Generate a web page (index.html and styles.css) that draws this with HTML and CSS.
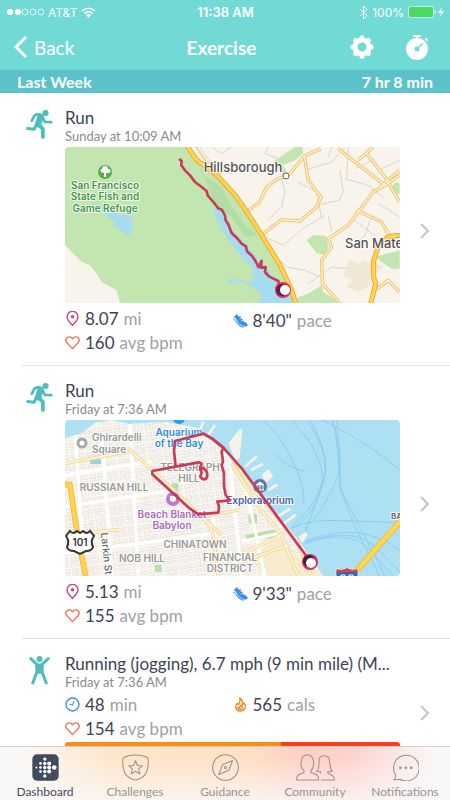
FILE: index.html
```html
<!DOCTYPE html>
<html lang="en">
<head>
    <meta charset="UTF-8">
    <meta name="viewport" content="width=device-width, initial-scale=1.0">
    <title>Exercise</title>
    <link rel="stylesheet" href="styles.css">
</head>
<body>

<!-- Shared icons -->
<svg class="sprite" aria-hidden="true">
    <symbol id="runner" viewBox="0 0 80 86">
        <circle cx="58" cy="9" r="9" fill="#4dbdbd"/>
        <g fill="none" stroke="#4dbdbd" stroke-linecap="round" stroke-linejoin="round">
            <path d="M17 32L24 18Q32 9 46 16" stroke-width="8"/>
            <path d="M43 20L36 42" stroke-width="19"/>
            <path d="M49 21L56 35L75 36" stroke-width="8"/>
            <path d="M31 43L24 57L5 55" stroke-width="9"/>
            <path d="M38 44L50 56L50 80" stroke-width="11"/>
        </g>
    </symbol>
    <symbol id="pin" viewBox="0 0 44 44">
        <path d="M22 42Q6 27 6 17A16 16 0 0 1 38 17Q38 27 22 42Z" fill="none" stroke="#d93b73" stroke-width="4"/>
        <circle cx="22" cy="17" r="5" fill="#d93b73"/>
    </symbol>
    <symbol id="heart" viewBox="0 0 44 44">
        <path d="M22 40L5 22C-3 10 13-2 22 11C31-2 47 10 39 22Z" fill="none" stroke="#f4705a" stroke-width="4" stroke-linejoin="round"/>
    </symbol>
    <symbol id="shoe" viewBox="0 0 44 44">
        <path d="M2 12L12 3Q14 12 22 10L32 26Q42 28 43 37Q39 42 29 38Q18 34 13 24Q9 15 2 12Z" fill="#3a8fe8"/>
        <path d="M2 18Q8 20 12 29Q19 39 30 42" fill="none" stroke="#3a8fe8" stroke-width="3" stroke-linecap="round"/>
        <path d="M19 18L25 15M23 24L29 21" stroke="#fff" stroke-width="2"/>
    </symbol>
    <symbol id="chevron" viewBox="0 0 10 16">
        <path d="M1 1L8 8L1 15" fill="none" stroke="#c4c4c8" stroke-width="2"/>
    </symbol>
</svg>

<div class="app">
    <header class="header">
        <div class="status">
            <div class="status-left">
                <svg width="37" height="8" viewBox="0 0 37 8" aria-hidden="true">
                    <g fill="#fff"><circle cx="3" cy="4" r="3"/><circle cx="11" cy="4" r="3"/></g>
                    <g fill="none" stroke="#fff" stroke-opacity=".8"><circle cx="18" cy="4" r="3"/><circle cx="26" cy="4" r="3"/><circle cx="34" cy="4" r="3"/></g>
                </svg>
                <span>AT&amp;T</span>
                <svg width="15" height="11" viewBox="0 0 15 11" aria-hidden="true">
                    <path d="M1 4Q7.500-1.500 14 4M3.500 6.500Q7.500 3 11.500 6.500" fill="none" stroke="#fff" stroke-width="1.600"/>
                    <path d="M5 8Q7.500 6 10 8L7.500 11Z" fill="#fff"/>
                </svg>
            </div>
            <strong class="clock">11:38 AM</strong>
            <div class="status-right">
                <svg width="9" height="15" viewBox="0 0 9 15" aria-hidden="true"><path d="M1 4L8 10.500L4.500 14V1L8 4.500L1 11" fill="none" stroke="#fff"/></svg>
                <span>100%</span>
                <svg width="36" height="12" viewBox="0 0 36 12" aria-hidden="true">
                    <rect x=".5" y=".5" width="25" height="11" rx="2" fill="#4cd95f" stroke="#c9f3ef"/>
                    <path d="M26.500 4Q29 6 26.500 8Z" fill="#fff"/>
                    <path d="M34 1L30 7H33L32 11L36 5H33Z" fill="#fff"/>
                </svg>
            </div>
        </div>
        <nav class="nav">
            <button class="back">
                <svg width="14" height="22" viewBox="0 0 14 22" aria-hidden="true"><path d="M12 1L2 11L12 21" fill="none" stroke="#fff" stroke-width="3"/></svg>
                Back
            </button>
            <h1>Exercise</h1>
            <div class="actions">
                <button aria-label="Settings">
                    <svg width="24" height="24" viewBox="-12 -12 24 24">
                        <circle r="7" fill="none" stroke="#fff" stroke-width="5"/>
                        <g stroke="#fff" stroke-width="5" stroke-linecap="round">
                            <path d="M0-9V-9.200M0 9V9.200M-9 0H-9.200M9 0H9.200M6.400 6.400L6.500 6.500M-6.400-6.400L-6.500-6.500M6.400-6.400L6.500-6.500M-6.400 6.400L-6.500 6.500"/>
                        </g>
                    </svg>
                </button>
                <button aria-label="Timer">
                    <svg width="24" height="25" viewBox="0 0 24 25">
                        <circle cx="12" cy="14" r="11" fill="#fff"/>
                        <path d="M9 1H15M12 1V4M21 4L22 5" stroke="#fff" stroke-width="2" stroke-linecap="round"/>
                        <path d="M12 14L17.500 8.500" stroke="#71dad4" stroke-width="1.500"/>
                        <circle cx="12" cy="14" r="2.500" fill="#71dad4"/>
                    </svg>
                </button>
            </div>
        </nav>
        <div class="week"><span>Last Week</span><span>7 hr 8 min</span></div>
    </header>

    <main class="list">
        <a class="item" href="#">
            <svg class="sport" width="27" height="29"><use href="#runner"/></svg>
            <div class="info">
                <h2>Run</h2>
                <p class="date">Sunday at 10:09 AM</p>
                <svg class="map" viewBox="0 0 335 156" preserveAspectRatio="xMidYMid slice">
                    <rect width="335" height="156" fill="#f8f3eb"/>
                    <g transform="scale(.3333)" fill="none" stroke-linejoin="round">
                        <path d="M0 0H365L395 39L455 84L510 144L590 264L645 354L692 469H165L155 430L110 405L95 380L75 355L50 345L25 320L0 293Z" fill="#c3e6b1"/>
                        <path d="M395 39L420 90L470 120L500 180L545 240L580 264L540 270L500 210L450 170Z" fill="#b3dda7"/>
                        <path d="M625 44L660 20L690 0H712L715 17L690 40L660 52L640 62ZM725 280L745 264L782 266L790 300L780 325L755 318ZM700 450L730 440L770 415L775 435L830 469H692ZM930 330L1004 310V365L980 365ZM975 120L995 105L1004 110V140L985 142ZM650 50L670 80L655 90L643 60Z" fill="#c3e6b1"/>
                        <path d="M835 385L855 335L880 350L895 340L955 358L930 380L915 415L880 435L845 420L862 400Z" fill="#f1e7d5"/>
                        <!-- lakes -->
                        <path d="M443 184L462 182L478 215L502 250L540 289L580 339L608 365L630 399L690 440L692 469H580L590 440L555 415L490 394L530 398L558 410L566 370L545 345L530 330L507 300L470 250ZM75 166L130 183L165 205L190 200L203 220L200 255L190 266L170 250L145 237L150 225L125 205L95 184ZM485 392L515 405L510 412L490 402Z" fill="#a5dcef"/>
                        <!-- small streets -->
                        <path d="M405 0L425 30L455 70L500 80M650 95L660 135L650 180L610 220M700 105L755 135L770 215M755 175L822 160L835 135L825 70M720 70L800 45L840 0M840 95L910 115L960 155M870 65L930 35M590 265L655 295L720 240L780 205M605 300L665 360L720 370L765 390M790 205L800 250M915 220L900 265L860 300M930 265L860 215M800 0L790 30M730 410L800 360L850 365M1004 210L940 170M1004 40L950 65M610 0L600 20L640 35M850 0L845 95M440 0L470 20L500 0" stroke="#d9d5cf" stroke-width="3"/>
                        <!-- secondary roads -->
                        <path d="M545 194L583 166L605 120L640 95L675 80L718 27L768 5M718 27L730 100L768 150L755 180L705 222L650 218L590 264M820 5L855 33L960 115L1004 85M960 115L925 135L895 175L850 235L790 275L800 300L770 340L772 410L825 469M875 190L950 225L970 260L980 275M880 40L925 0M905 20L960 90L1004 165M945 120L1004 70M930 430L970 400L1004 435" stroke="#f1c46a" stroke-width="10"/>
                        <path d="M545 194L583 166L605 120L640 95L675 80L718 27L768 5M718 27L730 100L768 150L755 180L705 222L650 218L590 264M820 5L855 33L960 115L1004 85M960 115L925 135L895 175L850 235L790 275L800 300L770 340L772 410L825 469M875 190L950 225L970 260L980 275M880 40L925 0M905 20L960 90L1004 165M945 120L1004 70M930 430L970 400L1004 435" stroke="#fdf4d7" stroke-width="4"/>
                        <!-- highways -->
                        <path d="M365-5L395 39L455 84L510 144L545 194L590 264L645 354L680 429L694 475M1010 266Q960 260 940 300L926 340V390L932 410L916 475" stroke="#e9a62d" stroke-width="15"/>
                        <path d="M365-5L395 39L455 84L510 144L545 194L590 264L645 354L680 429L694 475M1010 266Q960 260 940 300L926 340V390L932 410L916 475" stroke="#ffd34f" stroke-width="10"/>
                        <path d="M390-5L420 38L470 82" stroke="#f5d58b" stroke-width="6"/>
                        <!-- track -->
                        <path d="M345 38L350 42L349 55L360 70L375 85L390 105L410 120L425 132L428 145L445 165L460 184L470 188L480 205L482 220L490 232L500 258L515 272L530 290L543 298L546 313L562 328L573 345L580 360L590 342L588 362L602 360L600 375L612 388L630 397L640 402L643 415L655 428" stroke="#c93b59" stroke-width="8" stroke-linecap="round"/>
                    </g>
                    <circle cx="218" cy="143" r="8" fill="#dc2c5e"/>
                    <circle cx="217" cy="143" r="6" fill="#5e2340"/>
                    <circle cx="220" cy="143" r="5" fill="#fff"/>
                    <circle cx="221" cy="29" r="3" fill="#fff" stroke="#666" stroke-width="1"/>
                    <circle cx="40" cy="25" r="7" fill="#54af4c"/>
                    <path d="M36 25A2 2 0 0 1 37 22A3 3 0 0 1 43 22A2 2 0 0 1 44 26H41V30H39V26Z" fill="#fff"/>
                    <g class="label park">
                        <text x="40" y="42">San Francisco</text>
                        <text x="40" y="53">State Fish and</text>
                        <text x="40" y="65">Game Refuge</text>
                    </g>
                    <g class="label town">
                        <text x="178" y="25">Hillsborough</text>
                        <text class="from-left" x="280" y="101">San Mate</text>
                    </g>
                </svg>
                <dl class="stats">
                    <div><svg class="icon"><use href="#pin"/></svg><dd>8.07</dd><dt>mi</dt></div>
                    <div class="pace"><svg class="icon"><use href="#shoe"/></svg><dd>8'40"</dd><dt>pace</dt></div>
                    <div><svg class="icon"><use href="#heart"/></svg><dd>160</dd><dt>avg bpm</dt></div>
                </dl>
            </div>
            <svg class="more"><use href="#chevron"/></svg>
        </a>

        <a class="item" href="#">
            <svg class="sport" width="27" height="29"><use href="#runner"/></svg>
            <div class="info">
                <h2>Run</h2>
                <p class="date">Friday at 7:36 AM</p>
                <svg class="map" viewBox="0 0 335 156" preserveAspectRatio="xMidYMid slice">
                    <defs>
                        <pattern id="blocks" width="46" height="34" patternUnits="userSpaceOnUse" patternTransform="rotate(-8)">
                            <path d="M0 2H46M2 0V34M0 19H46M25 0V34" stroke="#d8d3cb" stroke-width="7"/>
                            <path d="M0 2H46M2 0V34M0 19H46M25 0V34" stroke="#fdfcfa" stroke-width="4"/>
                        </pattern>
                        <clipPath id="land"><path d="M0 55L50 40L90 8L140 0L190 12L300 5L400 25L475 80L525 133L625 273L695 353L775 469H0Z"/></clipPath>
                    </defs>
                    <rect width="335" height="156" fill="#ade0f2"/>
                    <g transform="scale(.3333)" fill="none" stroke-linejoin="round">
                        <!-- ferry lanes -->
                        <path d="M595 0Q650 50 680 120Q720 190 717 250M680 0Q745 70 760 120Q785 170 760 220Q730 280 680 320M725 0Q790 90 780 160Q755 290 680 325M735 0Q800 110 775 190Q740 280 720 340M800 0Q850 130 800 210Q770 280 720 325M805 0Q825 110 823 200L870 320L945 469M815 0Q826 120 828 210L900 350L960 469M770 0Q900 60 1004 150M680 325Q740 295 820 302L1004 307M720 365Q800 330 880 338Q950 350 1004 390M720 370Q840 320 920 370L1004 455M720 370Q850 325 910 385L985 469M625 100Q670 145 720 155" stroke="#8dcdf0" stroke-width="3"/>
                        <path d="M0 55L50 40L90 8L140 0L190 12L300 5L400 25L475 80L525 133L625 273L695 353L775 469H0Z" fill="#f6f2e9"/>
                        <!-- piers -->
                        <path d="M490 70L520 32Q530 20 532 30L524 115L510 120ZM590 163L612 148L624 168L602 192ZM700 350L722 336L728 345L712 370Z" fill="#f6f2e9"/>
                        <path d="M540 140L576 108M558 150L594 132M610 210L638 193M640 288L676 266M655 312L692 284M430 45L450 15M405 30L415 5" stroke="#f6f2e9" stroke-width="8"/>
                        <g clip-path="url(#land)">
                            <rect width="780" height="469" fill="url(#blocks)"/>
                            <path d="M600 469L555 415L640 350L780 469Z" fill="#f8ecd0"/>
                            <path d="M75 120H105V132H75ZM320 190H340V215H320ZM551 282H576V310H551ZM540 346L620 330L645 335L625 355L545 357ZM270 435H290V455H270Z" fill="#b8dfa5"/>
                            <path d="M75 116L107 112L108 132L78 130Z" fill="#94d5e3"/>
                            <path d="M30 40L60 469M110 35L140 469M195 12L220 469M0 165L260 125M0 260L330 210M0 400L450 340M490 85L530 469M540 190L600 469M445 280L455 469M530 365L640 340" stroke="#fff" stroke-width="10"/>
                            <path d="M0 130L190 95M190 85L470 345M0 345L165 328M410 290L520 270M490 90L550 190L695 360L740 469M500 130L580 260L650 345L700 469M345 230L430 310L445 345L460 469M535 400L640 350M520 430L670 375" stroke="#f4d99b" stroke-width="11"/>
                            <path d="M0 130L190 95M190 85L470 345M0 345L165 328M410 290L520 270M490 90L550 190L695 360L740 469M500 130L580 260L650 345L700 469M345 230L430 310L445 345L460 469M535 400L640 350M520 430L670 375" stroke="#fff5d9" stroke-width="5"/>
                            <path d="M0 194H15L35 330L62 469" stroke="#f3b838" stroke-width="17"/>
                            <path d="M0 194H15L35 330L62 469" stroke="#ffd451" stroke-width="12"/>
                        </g>
                        <path d="M1010 300L860 469" stroke="#efb93d" stroke-width="18"/>
                        <path d="M1010 300L860 469" stroke="#ffd84e" stroke-width="13"/>
                    </g>
                    <circle cx="17" cy="23" r="4" fill="#fff" stroke="#a9a9a9" stroke-width="3"/>
                    <circle cx="108" cy="79" r="7" fill="#b77bd0"/>
                    <path d="M105 76H111V80Q108 84 105 80Z" fill="#fff"/>
                    <circle cx="114" cy="-2" r="6" fill="#2b9ae8"/>
                    <circle cx="195" cy="66" r="7" fill="#6174b6"/>
                    <path d="M191 65L195 62L199 65ZM192 66V70M195 66V70M198 66V70M191 70H199" fill="#fff" stroke="#fff"/>
                    <g class="label place">
                        <text x="27" y="21">Ghirardelli</text>
                        <text x="27" y="33">Square</text>
                    </g>
                    <g class="label aqua">
                        <text x="114" y="16">Aquarium</text>
                        <text x="114" y="27">of the Bay</text>
                    </g>
                    <g class="label area">
                        <text x="125" y="51">TELEGRAPH</text>
                        <text x="124" y="62">HILL</text>
                        <text x="49" y="71">RUSSIAN HILL</text>
                        <text x="130" y="128">CHINATOWN</text>
                        <text x="77" y="142">NOB HILL</text>
                        <text x="165" y="141">FINANCIAL</text>
                        <text x="165" y="152">DISTRICT</text>
                    </g>
                    <g class="label shop">
                        <text x="107" y="98">Beach Blanket</text>
                        <text x="107" y="109">Babylon</text>
                    </g>
                    <text class="label museum" x="195" y="84">Exploratorium</text>
                    <text class="label street" transform="translate(38 134) rotate(84)">Larkin St</text>
                    <text class="label bay" x="326" y="99">BA</text>
                    <path d="M5 111Q8 115 12 111L15 113L18 111Q22 115 25 111L29 116Q25 121 28 127Q27 131 21 131L15 134L9 131Q3 131 2 127Q5 121 1 116Z" fill="#fff" stroke="#333" stroke-width="2"/>
                    <text class="label route" x="15" y="126">101</text>
                    <!-- interstate shield, cut by the map edge -->
                    <path d="M272 149Q277 151 282 148Q287 151 292 149Q294 152 293 157H271Q270 152 272 149Z" fill="#3568b2" stroke="#fff" stroke-width="1"/>
                    <path d="M272 149Q277 151 282 148Q287 151 292 149L293 152H271Z" fill="#d74549"/>
                    <path d="M276 157V155H280V157M284 157V155H288V157" fill="none" stroke="#fff" stroke-width="1"/>
                    <g transform="scale(.3333)" fill="none" stroke="#c93b59" stroke-width="8" stroke-linejoin="round" stroke-linecap="round">
                        <path d="M332 138L327 93L330 63L365 54L415 41L440 55L475 83L470 95L474 125L470 135L477 160V198L482 225L495 241L457 245L462 260L460 278L400 283L370 262L262 163V153L400 127L409 130L405 145L410 158L406 170Q412 180 420 178Q430 173 425 155L415 144L407 148"/>
                        <path d="M415 41L440 55L475 83L530 145L733 420"/>
                    </g>
                    <circle cx="245" cy="142" r="8" fill="#dc2c5e"/>
                    <circle cx="244" cy="141" r="6" fill="#402238"/>
                    <circle cx="246" cy="143" r="5" fill="#fff"/>
                </svg>
                <dl class="stats">
                    <div><svg class="icon"><use href="#pin"/></svg><dd>5.13</dd><dt>mi</dt></div>
                    <div class="pace"><svg class="icon"><use href="#shoe"/></svg><dd>9'33"</dd><dt>pace</dt></div>
                    <div><svg class="icon"><use href="#heart"/></svg><dd>155</dd><dt>avg bpm</dt></div>
                </dl>
            </div>
            <svg class="more"><use href="#chevron"/></svg>
        </a>

        <a class="item" href="#">
            <svg class="sport" width="27" height="29" viewBox="0 0 80 86">
                <circle cx="40" cy="9" r="9" fill="#4dbdbd"/>
                <path d="M14 8L32 25V48L20 80M66 8L48 25V48L60 80" fill="none" stroke="#4dbdbd" stroke-width="9" stroke-linecap="round" stroke-linejoin="round"/>
                <path d="M29 22H51L50 53H30Z" fill="#4dbdbd"/>
            </svg>
            <div class="info">
                <h2>Running (jogging), 6.7 mph (9 min mile) (M...</h2>
                <p class="date">Friday at 7:36 AM</p>
                <dl class="stats">
                    <div>
                        <svg class="icon" viewBox="0 0 44 44"><circle cx="22" cy="22" r="19" fill="none" stroke="#3a8fe8" stroke-width="4"/><path d="M13 21L22 24L26 12" fill="none" stroke="#3a8fe8" stroke-width="3"/></svg>
                        <dd>48</dd><dt>min</dt>
                    </div>
                    <div>
                        <svg class="icon" viewBox="0 0 44 44"><path d="M20 3Q31 13 27 23L33 18Q38 25 36 31Q32 41 22 41Q11 41 8 31Q7 24 12 19L17 22Q23 13 20 3ZM22 25Q18 34 14 30Q16 36 22 36Q28 35 28 30Q27 26 22 25Z" fill="#fff" stroke="#f5821f" stroke-width="4" stroke-linejoin="round"/></svg>
                        <dd>565</dd><dt>cals</dt>
                    </div>
                    <div><svg class="icon"><use href="#heart"/></svg><dd>154</dd><dt>avg bpm</dt></div>
                </dl>
                <div class="zones"><span class="fat-burn"></span><span class="cardio"></span></div>
            </div>
            <svg class="more"><use href="#chevron"/></svg>
        </a>
    </main>

    <nav class="tabs">
        <a class="active" href="#">
            <svg viewBox="0 0 80 80">
                <rect x="1" y="1" width="78" height="78" rx="14" fill="#414b5e"/>
                <g fill="#fff">
                    <circle cx="13" cy="40" r="3"/>
                    <circle cx="25" cy="28" r="4"/><circle cx="25" cy="40" r="4"/><circle cx="25" cy="52" r="4"/>
                    <circle cx="38" cy="15" r="5"/><circle cx="38" cy="28" r="5"/><circle cx="38" cy="40" r="5"/><circle cx="38" cy="52" r="5"/><circle cx="38" cy="65" r="5"/>
                    <circle cx="51" cy="28" r="6"/><circle cx="51" cy="40" r="6"/><circle cx="51" cy="52" r="6"/>
                    <circle cx="66" cy="40" r="7"/>
                </g>
            </svg>
            Dashboard
        </a>
        <a href="#">
            <svg viewBox="0 0 80 80">
                <path d="M40 3Q60 3 72 9Q78 12 78 20Q78 45 70 59Q58 75 40 77Q22 75 10 59Q2 45 2 20Q2 12 8 9Q20 3 40 3Z"/>
                <path d="M40 20L46 34L60 35L49 44L53 59L40 51L27 59L31 44L20 35L34 34Z"/>
            </svg>
            Challenges
        </a>
        <a href="#">
            <svg viewBox="0 0 80 80">
                <circle cx="40" cy="40" r="38"/>
                <path d="M61 19L50 48L20 61L31 32Z"/>
                <circle cx="40" cy="40" r="3"/>
            </svg>
            Guidance
        </a>
        <a href="#">
            <svg class="wide" viewBox="0 0 116 80">
                <path d="M24 50C10 38 12 2 34 2S57 38 44 50V55L58 60Q68 64 67 77H2Q1 64 11 60L24 55Z"/>
                <path d="M73 58V52Q66 54 61 51Q68 48 68 32C68 15 68 5 84 5S100 15 101 32Q102 46 108 51Q101 54 95 52V58L107 63Q115 67 114 77H74"/>
            </svg>
            Community
        </a>
        <a href="#">
            <svg viewBox="0 0 80 80">
                <path d="M11 63A38 38 0 1 1 24 75L5 77Q12 72 11 63Z"/>
                <g class="dots"><circle cx="25" cy="41" r="4"/><circle cx="41" cy="41" r="4"/><circle cx="57" cy="41" r="4"/></g>
            </svg>
            Notifications
        </a>
    </nav>
</div>

</body>
</html>
```
FILE: styles.css
```css
* {
    box-sizing: border-box;
}
body {
    margin: 0;
    font-family: Lato, "Open Sans", sans-serif;
    color: #3d4354;
    background-color: #fff;
}
button {
    border: none;
    padding: 0;
    background: none;
    color: inherit;
    font: inherit;
    cursor: pointer;
}
a {
    color: inherit;
    text-decoration: none;
}
h1, h2, p, dl, dd {
    margin: 0;
}
.sprite {
    position: absolute;
    width: 0;
    height: 0;
}
.app {
    display: flex;
    flex-direction: column;
    height: 100vh;
}

/* Header */
.header {
    background-color: #71dad4;
    color: #fff;
}
.status {
    display: grid;
    grid-template-columns: 1fr auto 1fr;
    align-items: center;
    height: 24px;
    padding: 0 6px 0 7px;
    font-family: Inter, sans-serif;
    font-size: 12px;
}
.status-left, .status-right {
    display: flex;
    align-items: center;
    gap: 4px;
}
.status-right {
    justify-content: flex-end;
}
.clock {
    font-size: 13px;
    font-weight: 600;
}
.nav {
    display: grid;
    grid-template-columns: 1fr auto 1fr;
    align-items: center;
    height: 46px;
    padding: 0 21px 0 14px;
}
.back {
    display: flex;
    align-items: center;
    gap: 6px;
}
.back, .nav h1 {
    font-size: 19px;
}
.actions {
    display: flex;
    justify-content: flex-end;
    gap: 31px;
}
.actions svg {
    display: block;
}
.week {
    display: flex;
    justify-content: space-between;
    height: 23px;
    padding: 0 17px;
    line-height: 23px;
    font-size: 16px;
    font-weight: 700;
    background-color: #5cc2ca;
}

/* Exercise list */
.list {
    flex: 1;
    min-height: 0;
    overflow: hidden;
}
.item {
    display: grid;
    grid-template-columns: 43px minmax(0, 1fr) 50px;
    margin-left: 22px;
    padding: 14px 0 11px;
    border-bottom: 1px solid #e4e4e6;
}
.sport {
    margin: 3px 0 0 4px;
}
.info h2 {
    overflow: hidden;
    white-space: nowrap;
    line-height: 22px;
    font-size: 17px;
    font-weight: 400;
}
.date {
    line-height: 14px;
    font-size: 13px;
    color: #8a8a8c;
}
.map {
    display: block;
    width: 100%;
    margin-top: 4px;
    border-radius: 4px;
}
.stats {
    display: grid;
    grid-template-columns: 1fr 1fr;
    margin-top: 3px;
}
.stats div {
    display: flex;
    align-items: center;
    gap: 5px;
    height: 24px;
    font-size: 17px;
}
.stats .pace {
    padding-top: 4px;
}
.stats dt {
    color: #a0a0a4;
}
.icon {
    width: 15px;
    height: 15px;
}
.more {
    align-self: center;
    justify-self: center;
    width: 10px;
    height: 16px;
}
.zones {
    display: flex;
    height: 30px;
    margin-top: 2px;
    border-radius: 3px;
    overflow: hidden;
}
.fat-burn {
    flex: 216;
    background-color: #fb8c19;
}
.cardio {
    flex: 119;
    background-color: #fb3d1a;
}

/* Map labels */
.label {
    font-family: Inter, sans-serif;
    font-size: 10px;
    font-weight: 600;
    text-anchor: middle;
    paint-order: stroke;
    stroke: rgba(255, 255, 255, 0.8);
    stroke-width: 2px;
}
.park {
    fill: #43974a;
}
.town {
    font-size: 13px;
    font-weight: 500;
    fill: #555;
}
.place, .bay, .from-left {
    text-anchor: start;
}
.place, .area {
    fill: #999;
}
.aqua {
    fill: #2b8fdc;
}
.shop {
    fill: #ac6bc6;
}
.museum {
    fill: #4d61a8;
}
.street, .bay {
    fill: #666;
}
.bay {
    font-size: 8px;
}
.street {
    font-weight: 500;
}
.route {
    fill: #333;
}

/* Tab bar */
.tabs {
    display: grid;
    grid-template-columns: repeat(5, 1fr);
    height: 54px;
    padding-top: 7px;
    border-top: 1px solid #d3cfcd;
    background:
        linear-gradient(transparent 20%, rgba(249, 248, 248, 0.8)),
        linear-gradient(to right, #f9f8f8 4%, #ffe5c8 26%, #ffe0c4 55%, #ffcfc6 68%, #ffd3cc 78%, #f9f8f8 97%);
}
.tabs a {
    display: flex;
    flex-direction: column;
    align-items: center;
    gap: 4px;
    line-height: 14px;
    font-size: 12px;
    color: #969494;
}
.tabs .active {
    color: #414b5e;
}
.tabs svg {
    width: 27px;
    height: 27px;
    fill: none;
    stroke: #969090;
    stroke-width: 3px;
    stroke-linejoin: round;
}
.tabs .wide {
    width: 39px;
}
.tabs .active svg, .tabs .dots {
    stroke: none;
}
.tabs .dots {
    fill: #969090;
}
```
